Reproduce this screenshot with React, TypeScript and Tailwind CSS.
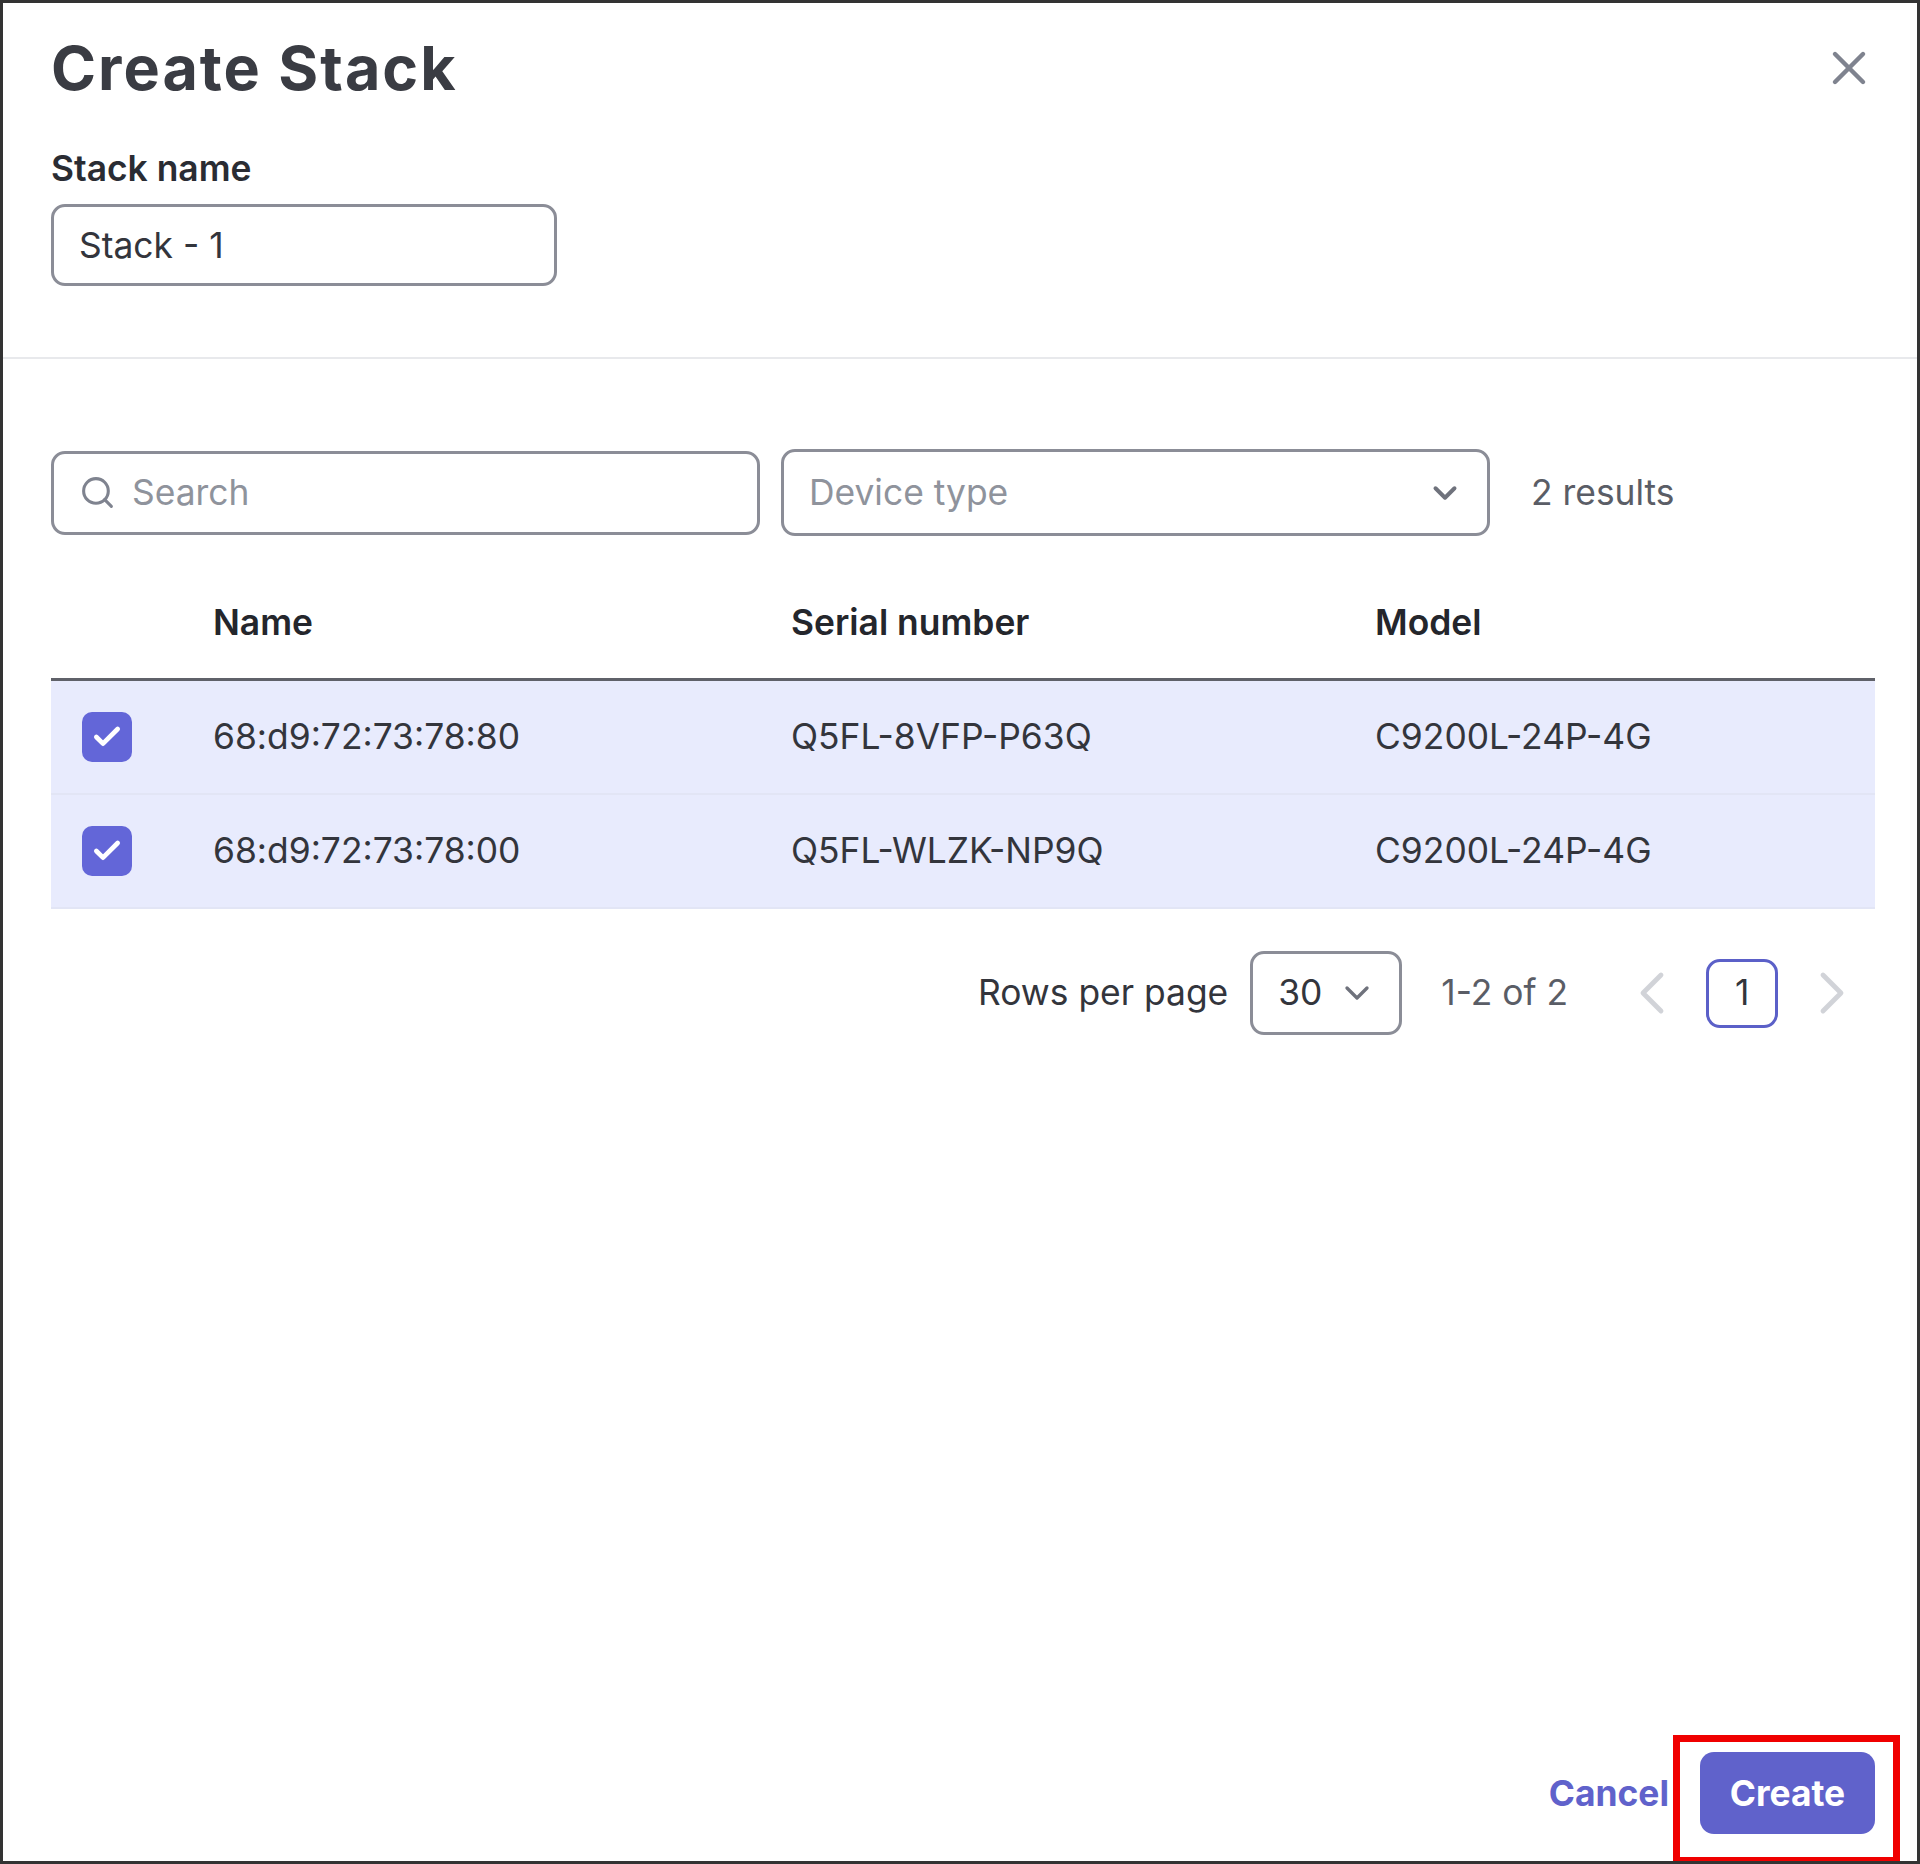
import { Check, ChevronDown, ChevronLeft, ChevronRight, Search, X } from "lucide-react";

const rows = [
  { name: "68:d9:72:73:78:80", serial: "Q5FL-8VFP-P63Q", model: "C9200L-24P-4G" },
  { name: "68:d9:72:73:78:00", serial: "Q5FL-WLZK-NP9Q", model: "C9200L-24P-4G" },
];

export default function App() {
  return (
    <div className="relative flex h-[1864px] w-[1920px] flex-col overflow-hidden border-[3px] border-[#333333] bg-white font-['Inter',sans-serif] text-[35.4px] text-[#33353c]">
      {/* Stack name */}
      <div className="h-[356px] border-b-2 border-[#e8e9ec] pt-[31px] pr-[40px] pl-[48px]">
        <div className="flex items-center justify-between">
          <h1 className="text-[61px] leading-[68px] font-bold tracking-[2px] text-[#3a3c43]">Create Stack</h1>
          <X className="h-[56px] w-[56px] text-[#7f838f]" strokeWidth={1.9} />
        </div>
        <div className="mt-[45px] leading-[44px] font-semibold text-[#2a2c33]">Stack name</div>
        <div className="mt-[13px] flex h-[82px] w-[506px] items-center rounded-[14px] border-[3px] border-[#8b8d97] pt-[2px] pl-[25px]">
          Stack - 1
        </div>
      </div>

      <div className="flex flex-1 flex-col pt-[90px] pr-[42px] pl-[48px]">
        {/* Filters */}
        <div className="flex h-[87px] items-center">
          <div className="flex h-[84px] w-[709px] items-center rounded-[14px] border-[3px] border-[#8b8d97] pl-[25px] text-[#8f939c]">
            <Search className="h-[37px] w-[37px] text-[#7f838f]" strokeWidth={2} />
            <span className="ml-[16px]">Search</span>
          </div>
          <div className="ml-[21px] flex h-[87px] w-[709px] items-center justify-between rounded-[14px] border-[3px] border-[#8b8d97] pr-[23px] pl-[25px] text-[#8f939c]">
            <span>Device type</span>
            <ChevronDown className="h-[38px] w-[38px] text-[#6f727c]" strokeWidth={2.5} />
          </div>
          <span className="ml-[41px] text-[#5a5d66]">2 results</span>
        </div>

        {/* Table */}
        <div className="mt-[52px] grid h-[93px] grid-cols-[162px_578px_584px_1fr] items-center border-b-[3px] border-[#5f6169] pb-[21px] font-semibold text-[#24262c]">
          <span className="col-start-2">Name</span>
          <span>Serial number</span>
          <span>Model</span>
        </div>
        {rows.map((row) => (
          <div
            key={row.name}
            className="grid h-[114px] grid-cols-[162px_578px_584px_1fr] items-center border-b-2 border-[#e2e5f5] bg-[#e8ebfd]"
          >
            <div className="ml-[31px] flex h-[50px] w-[50px] items-center justify-center rounded-[10px] bg-[#6366d8]">
              <Check className="h-[32px] w-[32px] text-white" strokeWidth={3.5} />
            </div>
            <span>{row.name}</span>
            <span>{row.serial}</span>
            <span>{row.model}</span>
          </div>
        ))}

        {/* Pagination */}
        <div className="mt-[42px] flex items-center">
          <span className="ml-[927px]">Rows per page</span>
          <div className="ml-[22px] flex h-[84px] w-[152px] items-center rounded-[14px] border-[3px] border-[#8b8d97] pl-[25px]">
            <span>30</span>
            <ChevronDown className="ml-[15px] h-[40px] w-[40px] text-[#6f727c]" strokeWidth={2} />
          </div>
          <span className="ml-[39px] text-[#5a5d66]">1-2 of 2</span>
          <ChevronLeft className="ml-[48px] h-[72px] w-[72px] text-[#d1d3d8]" strokeWidth={1.6} />
          <div className="ml-[18px] flex h-[69px] w-[72px] items-center justify-center rounded-[14px] border-[3px] border-[#5b60c8]">
            1
          </div>
          <ChevronRight className="ml-[18px] h-[72px] w-[72px] text-[#d1d3d8]" strokeWidth={1.6} />
        </div>

        {/* Footer */}
        <div className="mt-auto mb-[27px] flex items-center justify-end gap-[31px] font-bold">
          <button className="pt-[2px] text-[#6062cb]">Cancel</button>
          <button className="h-[82px] w-[175px] rounded-[14px] bg-[#6062cb] pt-[2px] text-white">Create</button>
        </div>
      </div>

      {/* Red callout around the Create button */}
      <div className="absolute top-[1732px] left-[1670px] h-[129px] w-[227px] border-[7px] border-[#f00000]" />
    </div>
  );
}
